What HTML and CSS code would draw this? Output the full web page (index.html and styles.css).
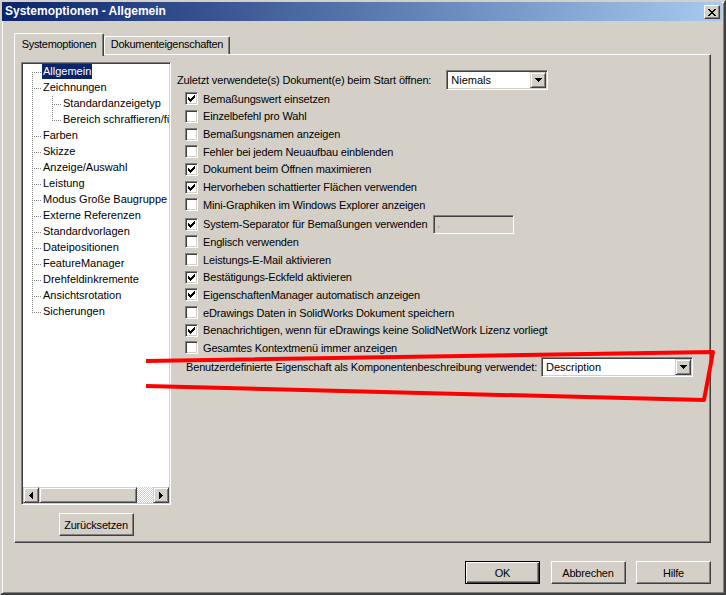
FILE: index.html
```html
<!DOCTYPE html>
<html lang="de">
<head>
<meta charset="utf-8">
<title>Systemoptionen - Allgemein</title>
<link rel="stylesheet" href="styles.css">
</head>
<body>
<div class="window">
  <div class="titlebar">
    <span class="title">Systemoptionen - Allgemein</span>
    <span class="close"><svg width="8" height="7" viewBox="0 0 8 7" shape-rendering="crispEdges"><path d="M0 0h2v1H0z M6 0h2v1H6z M1 1h2v1H1z M5 1h2v1H5z M2 2h4v1H2z M3 3h2v1H3z M2 4h4v1H2z M1 5h2v1H1z M5 5h2v1H5z M0 6h2v1H0z M6 6h2v1H6z" fill="#000"/></svg></span>
  </div>
  <div class="body">
    <div class="tabs">
      <div class="tab active">Systemoptionen</div>
      <div class="tab">Dokumenteigenschaften</div>
    </div>
    <div class="panel">
      <div class="left">
        <div class="tree">
          <div class="items">
            <div class="node"><i class="pad"></i><i class="c c-first"></i><span class="lbl sel">Allgemein</span></div>
            <div class="node"><i class="pad"></i><i class="c c-mid"></i><span class="lbl">Zeichnungen</span></div>
            <div class="node"><i class="pad"></i><i class="v"></i><i class="pad2"></i><i class="c c-mid"></i><span class="lbl">Standardanzeigetyp</span></div>
            <div class="node"><i class="pad"></i><i class="v"></i><i class="pad2"></i><i class="c c-last"></i><span class="lbl">Bereich schraffieren/füllen</span></div>
            <div class="node"><i class="pad"></i><i class="c c-mid"></i><span class="lbl">Farben</span></div>
            <div class="node"><i class="pad"></i><i class="c c-mid"></i><span class="lbl">Skizze</span></div>
            <div class="node"><i class="pad"></i><i class="c c-mid"></i><span class="lbl">Anzeige/Auswahl</span></div>
            <div class="node"><i class="pad"></i><i class="c c-mid"></i><span class="lbl">Leistung</span></div>
            <div class="node"><i class="pad"></i><i class="c c-mid"></i><span class="lbl">Modus Große Baugruppe</span></div>
            <div class="node"><i class="pad"></i><i class="c c-mid"></i><span class="lbl">Externe Referenzen</span></div>
            <div class="node"><i class="pad"></i><i class="c c-mid"></i><span class="lbl">Standardvorlagen</span></div>
            <div class="node"><i class="pad"></i><i class="c c-mid"></i><span class="lbl">Dateipositionen</span></div>
            <div class="node"><i class="pad"></i><i class="c c-mid"></i><span class="lbl">FeatureManager</span></div>
            <div class="node"><i class="pad"></i><i class="c c-mid"></i><span class="lbl">Drehfeldinkremente</span></div>
            <div class="node"><i class="pad"></i><i class="c c-mid"></i><span class="lbl">Ansichtsrotation</span></div>
            <div class="node"><i class="pad"></i><i class="c c-last"></i><span class="lbl">Sicherungen</span></div>
          </div>
          <div class="hscroll">
            <span class="sbtn"><svg width="4" height="7" viewBox="0 0 4 7" shape-rendering="crispEdges"><path d="M3 0h1v7H3V6H2V5H1V4H0V3h1V2h1V1h1z" fill="#000"/></svg></span>
            <span class="thumb"></span>
            <span class="track"></span>
            <span class="sbtn"><svg width="4" height="7" viewBox="0 0 4 7" shape-rendering="crispEdges"><path d="M0 0h1v1h1v1h1v1h1v1H3v1H2v1H1v1H0z" fill="#000"/></svg></span>
          </div>
        </div>
        <button class="btn reset">Zurücksetzen</button>
      </div>
      <div class="right">
        <div class="first">
          <span>Zuletzt verwendete(s) Dokument(e) beim Start öffnen:</span>
          <div class="combo niemals"><span class="val">Niemals</span><span class="dd"><svg width="7" height="4" viewBox="0 0 7 4" shape-rendering="crispEdges"><path d="M0 0h7v1H6v1H5v1H4v1H3V3H2V2H1V1H0z" fill="#000"/></svg></span></div>
        </div>
        <div class="opt"><i class="cb"><svg width="7" height="7" viewBox="0 0 7 7" shape-rendering="crispEdges"><path d="M0 2h1v3H0z M1 3h1v3H1z M2 4h1v3H2z M3 3h1v3H3z M4 2h1v3H4z M5 1h1v3H5z M6 0h1v3H6z" fill="#000"/></svg></i><span>Bemaßungswert einsetzen</span></div>
        <div class="opt"><i class="cb"></i><span>Einzelbefehl pro Wahl</span></div>
        <div class="opt"><i class="cb"></i><span>Bemaßungsnamen anzeigen</span></div>
        <div class="opt"><i class="cb"></i><span>Fehler bei jedem Neuaufbau einblenden</span></div>
        <div class="opt"><i class="cb"><svg width="7" height="7" viewBox="0 0 7 7" shape-rendering="crispEdges"><path d="M0 2h1v3H0z M1 3h1v3H1z M2 4h1v3H2z M3 3h1v3H3z M4 2h1v3H4z M5 1h1v3H5z M6 0h1v3H6z" fill="#000"/></svg></i><span>Dokument beim Öffnen maximieren</span></div>
        <div class="opt"><i class="cb"><svg width="7" height="7" viewBox="0 0 7 7" shape-rendering="crispEdges"><path d="M0 2h1v3H0z M1 3h1v3H1z M2 4h1v3H2z M3 3h1v3H3z M4 2h1v3H4z M5 1h1v3H5z M6 0h1v3H6z" fill="#000"/></svg></i><span>Hervorheben schattierter Flächen verwenden</span></div>
        <div class="opt"><i class="cb"></i><span>Mini-Graphiken im Windows Explorer anzeigen</span></div>
        <div class="opt sep"><i class="cb"><svg width="7" height="7" viewBox="0 0 7 7" shape-rendering="crispEdges"><path d="M0 2h1v3H0z M1 3h1v3H1z M2 4h1v3H2z M3 3h1v3H3z M4 2h1v3H4z M5 1h1v3H5z M6 0h1v3H6z" fill="#000"/></svg></i><span>System-Separator für Bemaßungen verwenden</span><span class="field">,</span></div>
        <div class="opt"><i class="cb"></i><span>Englisch verwenden</span></div>
        <div class="opt"><i class="cb"></i><span>Leistungs-E-Mail aktivieren</span></div>
        <div class="opt"><i class="cb"><svg width="7" height="7" viewBox="0 0 7 7" shape-rendering="crispEdges"><path d="M0 2h1v3H0z M1 3h1v3H1z M2 4h1v3H2z M3 3h1v3H3z M4 2h1v3H4z M5 1h1v3H5z M6 0h1v3H6z" fill="#000"/></svg></i><span>Bestätigungs-Eckfeld aktivieren</span></div>
        <div class="opt"><i class="cb"><svg width="7" height="7" viewBox="0 0 7 7" shape-rendering="crispEdges"><path d="M0 2h1v3H0z M1 3h1v3H1z M2 4h1v3H2z M3 3h1v3H3z M4 2h1v3H4z M5 1h1v3H5z M6 0h1v3H6z" fill="#000"/></svg></i><span>EigenschaftenManager automatisch anzeigen</span></div>
        <div class="opt"><i class="cb"></i><span>eDrawings Daten in SolidWorks Dokument speichern</span></div>
        <div class="opt"><i class="cb"><svg width="7" height="7" viewBox="0 0 7 7" shape-rendering="crispEdges"><path d="M0 2h1v3H0z M1 3h1v3H1z M2 4h1v3H2z M3 3h1v3H3z M4 2h1v3H4z M5 1h1v3H5z M6 0h1v3H6z" fill="#000"/></svg></i><span>Benachrichtigen, wenn für eDrawings keine SolidNetWork Lizenz vorliegt</span></div>
        <div class="opt"><i class="cb"></i><span>Gesamtes Kontextmenü immer anzeigen</span></div>
        <div class="last">
          <span>Benutzerdefinierte Eigenschaft als Komponentenbeschreibung verwendet:</span>
          <div class="combo desc"><span class="val">Description</span><span class="dd"><svg width="7" height="4" viewBox="0 0 7 4" shape-rendering="crispEdges"><path d="M0 0h7v1H6v1H5v1H4v1H3V3H2V2H1V1H0z" fill="#000"/></svg></span></div>
        </div>
      </div>
    </div>
    <div class="footer">
      <button class="btn default">OK</button>
      <button class="btn">Abbrechen</button>
      <button class="btn">Hilfe</button>
    </div>
  </div>
  <svg class="annot" width="726" height="595" viewBox="0 0 726 595"><path d="M146 361 C 300 358, 500 355, 713 352 L 704 400 C 500 395, 300 390, 146 386" fill="none" stroke="#ff0000" stroke-width="4" stroke-linejoin="round"/></svg>
</div>
</body>
</html>
```

FILE: styles.css
```css
* { box-sizing: border-box; }
html, body { margin: 0; padding: 0; }
body {
  background: #D4D0C8;
  font-family: "Liberation Sans", Arial, sans-serif;
  font-size: 11px;
  color: #000;
}
.window {
  position: relative;
  width: 726px;
  height: 595px;
  background: #D4D0C8;
  border: 2px solid;
  border-color: #D4D0C8 #404040 #404040 #D4D0C8;
  box-shadow: inset 1px 1px #fff, inset -1px -1px #808080;
  padding-right: 2px;
}
.titlebar {
  height: 19px;
  display: flex;
  align-items: flex-start;
  justify-content: space-between;
  background: linear-gradient(to right, #0A246A, #A6CAF0);
  color: #fff;
}
.title {
  font-weight: bold;
  font-size: 12px;
  line-height: 19px;
  padding-left: 3px;
}
.close {
  margin: 3px 2px 0 0;
  width: 16px;
  height: 14px;
  background: #D4D0C8;
  border: 1px solid;
  border-color: #fff #404040 #404040 #fff;
  box-shadow: inset -1px -1px #808080;
  display: flex;
  align-items: center;
  justify-content: center;
}
.body { padding: 12px 11px 0 12px; }
.tabs {
  display: flex;
  align-items: flex-end;
  height: 21px;
  letter-spacing: -0.3px;
}
.tab {
  width: 126px;
  height: 18px;
  display: flex;
  align-items: flex-end;
  justify-content: center;
  line-height: 13px;
  padding-bottom: 3px;
  border: 1px solid;
  border-bottom: 0;
  border-color: #fff #404040 #404040 #fff;
  box-shadow: inset -1px 0 #808080;
  border-radius: 2px 2px 0 0;
  background: #D4D0C8;
}
.tab.active {
  width: 90px;
  height: 23px;
  margin-bottom: -2px;
  padding-bottom: 5px;
  position: relative;
  z-index: 1;
}
.panel {
  height: 489px;
  border: 1px solid;
  border-color: #fff #404040 #404040 #fff;
  box-shadow: inset -1px -1px #808080;
  display: flex;
  align-items: flex-start;
  padding: 7px 0 0 6px;
}
.left {
  width: 150px;
  display: flex;
  flex-direction: column;
  align-items: center;
  gap: 8px;
}
.tree {
  width: 150px;
  height: 443px;
  background: #fff;
  border: 1px solid;
  border-color: #808080 #fff #fff #808080;
  box-shadow: inset 1px 1px #404040, inset -1px -1px #D4D0C8;
  padding: 1px;
  display: flex;
  flex-direction: column;
}
.items {
  flex: 1;
  overflow: hidden;
  white-space: nowrap;
}
.node {
  display: flex;
  height: 16px;
  align-items: flex-start;
}
.pad { width: 9px; flex: none; }
.pad2 { width: 10px; flex: none; }
.c, .v {
  width: 10px;
  height: 16px;
  flex: none;
  background-repeat: no-repeat;
}
.v {
  background-image: repeating-linear-gradient(to bottom, #808080 0 1px, transparent 1px 2px);
  background-size: 1px 16px;
  background-position: 0 0;
}
.c-mid {
  background-image: repeating-linear-gradient(to bottom, #808080 0 1px, transparent 1px 2px),
                    repeating-linear-gradient(to right, #808080 0 1px, transparent 1px 2px);
  background-size: 1px 16px, 8px 1px;
  background-position: 0 0, 2px 8px;
}
.c-first {
  background-image: repeating-linear-gradient(to bottom, #808080 0 1px, transparent 1px 2px),
                    repeating-linear-gradient(to right, #808080 0 1px, transparent 1px 2px);
  background-size: 1px 8px, 8px 1px;
  background-position: 0 8px, 2px 8px;
}
.c-last {
  background-image: repeating-linear-gradient(to bottom, #808080 0 1px, transparent 1px 2px),
                    repeating-linear-gradient(to right, #808080 0 1px, transparent 1px 2px);
  background-size: 1px 9px, 8px 1px;
  background-position: 0 0, 2px 8px;
}
.lbl {
  height: 15px;
  line-height: 15px;
  padding: 0 1px;
}
.sel { background: #0A246A; color: #fff; }
.hscroll {
  height: 16px;
  flex: none;
  display: flex;
}
.sbtn, .thumb {
  height: 16px;
  background: #D4D0C8;
  border: 1px solid;
  border-color: #D4D0C8 #404040 #404040 #D4D0C8;
  box-shadow: inset 1px 1px #fff, inset -1px -1px #808080;
}
.sbtn {
  width: 16px;
  flex: none;
  display: flex;
  align-items: center;
  justify-content: center;
}
.thumb { width: 98px; flex: none; }
.track {
  flex: 1;
  background-color: #fff;
  background-image: repeating-conic-gradient(#D4D0C8 0 25%, #fff 0 50%);
  background-size: 2px 2px;
}
.btn {
  width: 75px;
  height: 23px;
  padding: 0;
  margin: 0;
  font-family: inherit;
  font-size: 11px;
  letter-spacing: -0.2px;
  color: #000;
  background: #D4D0C8;
  border: 1px solid;
  border-color: #fff #404040 #404040 #fff;
  box-shadow: inset -1px -1px #808080;
}
.btn.default {
  border-color: #000;
  box-shadow: inset 1px 1px #fff, inset -1px -1px #404040, inset -2px -2px #808080;
}
.right {
  margin-left: 6px;
  margin-top: 8px;
  display: flex;
  flex-direction: column;
  letter-spacing: -0.15px;
}
.first {
  display: flex;
  align-items: center;
  height: 20px;
  gap: 15px;
  white-space: nowrap;
}
.combo {
  display: flex;
  align-items: center;
  height: 20px;
  background: #fff;
  border: 1px solid;
  border-color: #808080 #fff #fff #808080;
  box-shadow: inset 1px 1px #404040, inset -1px -1px #D4D0C8;
  padding: 1px;
}
.combo.niemals { width: 102px; }
.combo.desc { width: 152px; }
.combo .val { flex: 1; padding-left: 3px; letter-spacing: 0; }
.dd {
  width: 16px;
  height: 16px;
  flex: none;
  background: #D4D0C8;
  border: 1px solid;
  border-color: #D4D0C8 #404040 #404040 #D4D0C8;
  box-shadow: inset 1px 1px #fff, inset -1px -1px #808080;
  display: flex;
  align-items: center;
  justify-content: center;
}
.opt {
  display: flex;
  align-items: center;
  height: 17.65px;
  padding-left: 8px;
  gap: 5px;
  white-space: nowrap;
}
.opt.sep { margin-top: 2px; }
.cb {
  width: 13px;
  height: 13px;
  flex: none;
  background: #fff;
  border: 1px solid;
  border-color: #808080 #fff #fff #808080;
  box-shadow: inset 1px 1px #404040, inset -1px -1px #D4D0C8;
  display: flex;
  align-items: center;
  justify-content: center;
}
.field {
  width: 81px;
  height: 19px;
  flex: none;
  margin-left: 1px;
  background: #D4D0C8;
  border: 1px solid;
  border-color: #808080 #fff #fff #808080;
  box-shadow: inset 1px 1px #404040, inset -1px -1px #D4D0C8;
  color: #808080;
  font-size: 9px;
  line-height: 17px;
  padding-left: 3px;
}
.last {
  display: flex;
  align-items: center;
  height: 20px;
  padding-left: 9px;
  gap: 4px;
  white-space: nowrap;
}
.footer {
  display: flex;
  justify-content: flex-end;
  gap: 10.5px;
  margin-top: 18px;
}
.annot {
  position: absolute;
  left: -2px;
  top: -2px;
  pointer-events: none;
}
```
